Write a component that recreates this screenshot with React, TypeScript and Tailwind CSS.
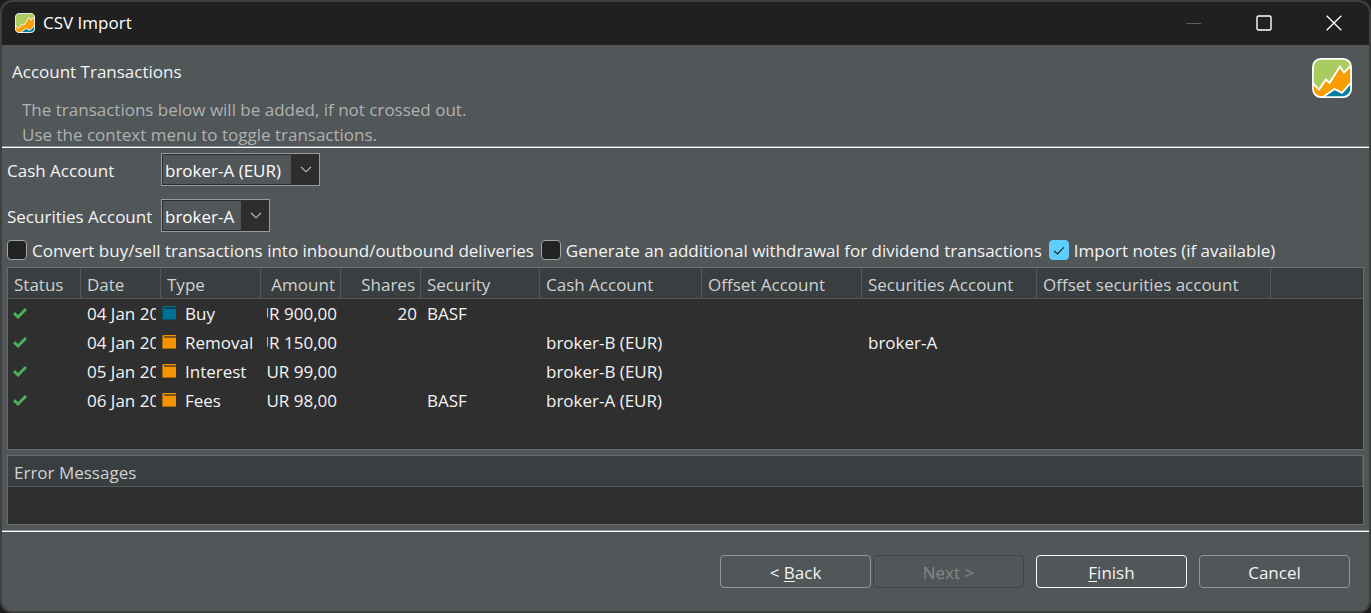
import React from "react";

type Row = {
  date: string;
  type: string;
  kind: "security" | "cash";
  amount: string;
  shares?: string;
  security?: string;
  cash?: string;
  securities?: string;
};

const rows: Row[] = [
  { date: "04 Jan 2022", type: "Buy", kind: "security", amount: "EUR 900,00", shares: "20", security: "BASF" },
  { date: "04 Jan 2022", type: "Removal", kind: "cash", amount: "EUR 150,00", cash: "broker-B (EUR)", securities: "broker-A" },
  { date: "05 Jan 2022", type: "Interest", kind: "cash", amount: "EUR 99,00", cash: "broker-B (EUR)" },
  { date: "06 Jan 2022", type: "Fees", kind: "cash", amount: "EUR 98,00", security: "BASF", cash: "broker-A (EUR)" },
];

const columns = [
  { title: "Status", width: "w-[73px]", align: "text-left" },
  { title: "Date", width: "w-[80px]", align: "text-left" },
  { title: "Type", width: "w-[100px]", align: "text-left" },
  { title: "Amount", width: "w-[80px]", align: "text-right" },
  { title: "Shares", width: "w-[80px]", align: "text-right" },
  { title: "Security", width: "w-[119px]", align: "text-left" },
  { title: "Cash Account", width: "w-[162px]", align: "text-left" },
  { title: "Offset Account", width: "w-[160px]", align: "text-left" },
  { title: "Securities Account", width: "w-[175px]", align: "text-left" },
  { title: "Offset securities account", width: "w-[234px]", align: "text-left" },
];

function Logo({ className }: { className: string }) {
  return (
    <svg viewBox="0 0 40 40" className={className} aria-hidden="true">
      <defs>
        <clipPath id="logo-tile">
          <rect x="1" y="1" width="38" height="38" rx="8" />
        </clipPath>
      </defs>
      <g clipPath="url(#logo-tile)">
        <rect width="40" height="40" fill="#a9cb5f" />
        <path d="M0 24 L7 31.5 L14 21.5 L17.5 25 L28 8.5 L32 14.5 L40 6.5 V40 H0 Z" fill="#f99d04" stroke="#fff" strokeWidth="1.8" />
        <path d="M9 40.5 L22.5 31 L30 34.8 L40 23.5 V42 Z" fill="#057f9c" stroke="#fff" strokeWidth="1.8" />
      </g>
      <rect x="0.9" y="0.9" width="38.2" height="38.2" rx="8" fill="none" stroke="#fff" strokeWidth="1.8" />
    </svg>
  );
}

function StatusCheck() {
  return (
    <svg viewBox="0 0 14 12" className="mb-0.5 ml-[5px] h-3 w-3.5" role="img" aria-label="OK">
      <path d="M1 6.2 L5 10 L13 2" fill="none" stroke="#4bb057" strokeWidth="3" />
    </svg>
  );
}

function TypeIcon({ kind }: { kind: Row["kind"] }) {
  const [fill, edge, band] = kind === "cash" ? ["#f59300", "#a86909", "#7d5417"] : ["#006f92", "#075268", "#0d4455"];
  return (
    <svg viewBox="0 0 14 14" className="mb-0.5 h-3.5 w-3.5 shrink-0" aria-hidden="true">
      <rect width="14" height="14" rx="1" fill={edge} />
      <rect x="1" y="1" width="13" height="12" fill={fill} />
      <rect x="2" y="1" width="12" height="2" fill={band} />
      <rect x="2" width="12" height="1" fill={fill} />
    </svg>
  );
}

function Combo({ id, value, width }: { id: string; value: string; width: string }) {
  return (
    <div className={`relative h-[33px] border border-[#9a9b9b] bg-[#2d2d2d] p-px ${width}`}>
      <select
        id={id}
        defaultValue={value}
        className="block h-full w-full appearance-none border-r-[27px] border-[#2d2d2d] bg-[#515658] pt-0.5 pl-0.5 text-white outline-none"
      >
        <option>{value}</option>
      </select>
      <svg viewBox="0 0 12 7" className="pointer-events-none absolute top-3 right-[7px] h-[7px] w-3" aria-hidden="true">
        <path d="M1 0.8 L6 5.8 L11 0.8" fill="none" stroke="#c8c8c8" strokeWidth="1.1" />
      </svg>
    </div>
  );
}

function Check({ label, checked }: { label: string; checked?: boolean }) {
  return (
    <label className="flex items-center gap-[5px] whitespace-nowrap">
      <span className="relative block h-5 w-5">
        <input
          type="checkbox"
          defaultChecked={checked}
          className="peer block h-5 w-5 appearance-none rounded border border-[#a3a4a5] bg-[#232323] checked:border-[#60cdff] checked:bg-[#60cdff]"
        />
        <svg viewBox="0 0 20 20" className="pointer-events-none absolute inset-0 hidden h-5 w-5 peer-checked:block" aria-hidden="true">
          <path d="M5.2 11 L8.5 14 L14.8 7.4" fill="none" stroke="#10222c" strokeWidth="1.1" />
        </svg>
      </span>
      <span className="pt-0.5">{label}</span>
    </label>
  );
}

function DialogButton({ look, disabled, children }: { look: string; disabled?: boolean; children: React.ReactNode }) {
  return (
    <button type="button" disabled={disabled} className={`h-[33px] w-[151px] rounded border pt-0.5 ${look}`}>
      {children}
    </button>
  );
}

export default function App() {
  return (
    <div className="flex min-h-screen bg-[#1c1c1c] font-['Open_Sans','Noto_Sans',sans-serif] text-[17px] leading-[25px] text-[#f4f4f4]">
      <div className="flex min-w-0 flex-1 flex-col overflow-hidden rounded-xl border-2 border-[#3f4040] bg-[#515658]">
        <header className="flex h-[43px] shrink-0 items-center bg-[#202020] pb-0.5 pl-[13px] text-white">
          <Logo className="mr-2 h-5 w-5" />
          <h1 className="flex-1">CSV Import</h1>
          <div className="flex">
            <button type="button" disabled aria-label="Minimize" className="flex h-10 w-[70px] items-center justify-center">
              <svg viewBox="0 0 16 16" className="h-4 w-4"><path d="M0 8.5 H15" stroke="#5c5c5c" fill="none" /></svg>
            </button>
            <button type="button" aria-label="Maximize" className="flex h-10 w-[70px] items-center justify-center">
              <svg viewBox="0 0 16 16" className="h-4 w-4"><rect x="1" y="1" width="14" height="14" rx="1.5" stroke="#fff" strokeWidth="1.4" fill="none" /></svg>
            </button>
            <button type="button" aria-label="Close" className="flex h-10 w-[70px] items-center justify-center">
              <svg viewBox="0 0 16 16" className="h-4 w-4"><path d="M0.7 0.7 L15.3 15.3 M15.3 0.7 L0.7 15.3" stroke="#fff" strokeWidth="1.3" fill="none" /></svg>
            </button>
          </div>
        </header>

        <section className="flex h-[103px] shrink-0 justify-between border-b border-white pr-[17px] pl-2.5 shadow-[inset_0_-1px_0_#969899]">
          <div className="pt-3.5">
            <h2>Account Transactions</h2>
            <p className="pt-[13px] pl-2.5 text-[#b0b1b2]">
              The transactions below will be added, if not crossed out.
              <br />
              Use the context menu to toggle transactions.
            </p>
          </div>
          <Logo className="mt-[13px] h-10 w-10" />
        </section>

        <main className="flex flex-1 flex-col px-[5px] pt-[5px] pb-1.5">
          <div className="grid grid-cols-[154px_1fr] items-center gap-y-[13px]">
            <label htmlFor="cash" className="pt-0.5">Cash Account</label>
            <Combo id="cash" value="broker-A (EUR)" width="w-[159px]" />
            <label htmlFor="securities" className="pt-0.5">Securities Account</label>
            <Combo id="securities" value="broker-A" width="w-[109px]" />
          </div>
          <div className="flex h-[35px] items-center gap-[7px]">
            <Check label="Convert buy/sell transactions into inbound/outbound deliveries" />
            <Check label="Generate an additional withdrawal for dividend transactions" />
            <Check label="Import notes (if available)" checked />
          </div>

          <div className="flex-1 overflow-hidden border border-[#696b6c] bg-[#2f2f2f]">
            <table className="w-full table-fixed border-separate border-spacing-0">
              <thead>
                <tr className="h-[31px] bg-[#393e40] text-[#d0d1d1]">
                  {columns.map((c) => (
                    <th
                      key={c.title}
                      scope="col"
                      className={`border-r border-b border-[#555758] pt-0.5 pr-[5px] pl-1.5 font-normal whitespace-nowrap ${c.width} ${c.align}`}
                    >
                      {c.title}
                    </th>
                  ))}
                  <td className="border-b border-[#555758]" />
                </tr>
              </thead>
              <tbody>
                {rows.map((r) => (
                  <tr key={r.date + r.type} className="h-[29px] whitespace-nowrap">
                    <td className="p-0"><StatusCheck /></td>
                    <td className="pr-[5px] pl-1.5"><div className="overflow-hidden">{r.date}</div></td>
                    <td className="p-0">
                      <div className="flex items-center gap-[9px] pl-px">
                        <TypeIcon kind={r.kind} />
                        <span>{r.type}</span>
                      </div>
                    </td>
                    <td className="pr-1 pl-1.5">
                      <div className="flex justify-end overflow-hidden"><span>{r.amount}</span></div>
                    </td>
                    <td className="pr-1 text-right">{r.shares}</td>
                    <td className="pl-1.5">{r.security}</td>
                    <td className="pl-1.5">{r.cash}</td>
                    <td />
                    <td className="pl-1.5">{r.securities}</td>
                    <td />
                    <td />
                  </tr>
                ))}
              </tbody>
            </table>
          </div>

          <div className="mt-[5px] h-[70px] shrink-0 border border-[#696b6c] bg-[#2f2f2f]">
            <table className="w-full border-separate border-spacing-0">
              <thead>
                <tr className="h-[31px] bg-[#393e40] text-[#d0d1d1]">
                  <th scope="col" className="border-r border-b border-[#555758] pt-0.5 pl-1.5 text-left font-normal">Error Messages</th>
                </tr>
              </thead>
            </table>
          </div>
        </main>

        <footer className="flex h-20 shrink-0 items-start justify-end border-t border-white pt-[23px] pr-[19px] shadow-[0_-1px_0_#969899]">
          <DialogButton look="border-[#929495]">&lt; <u className="underline-offset-2">B</u>ack</DialogButton>
          <div className="ml-0.5 mr-3 flex">
            <DialogButton disabled look="border-[#414445] text-[#858889]">Next &gt;</DialogButton>
          </div>
          <DialogButton look="border-white"><u className="underline-offset-2">F</u>inish</DialogButton>
          <div className="ml-3 flex">
            <DialogButton look="border-[#929495]">Cancel</DialogButton>
          </div>
        </footer>
      </div>
    </div>
  );
}
